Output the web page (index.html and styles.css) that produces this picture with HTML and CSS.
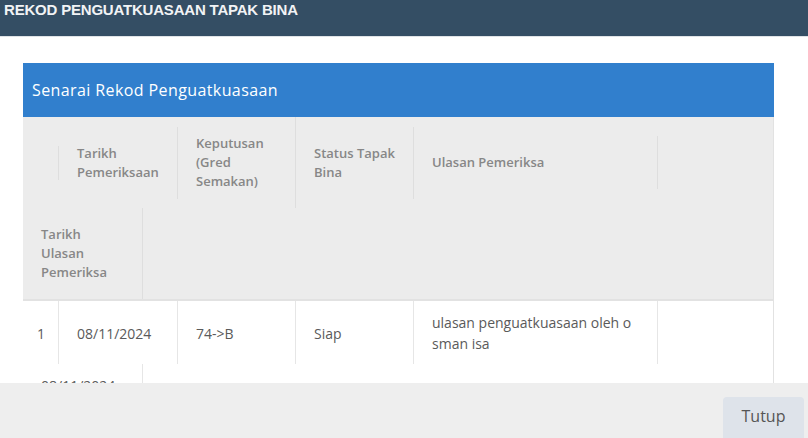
FILE: index.html
```html
<!DOCTYPE html>
<html lang="ms">
<head>
  <meta charset="UTF-8" />
  <meta name="viewport" content="width=device-width, initial-scale=1.0"/>
  <title>Rekod Penguatkuasaan Tapak Bina</title>
  <link rel="stylesheet" href="styles.css">
</head>
<body>

  <div class="modal">
    <div class="modal-header">
      <h4 class="modal-title">REKOD PENGUATKUASAAN TAPAK BINA</h4>
    </div>

    <div class="modal-body">
      <div class="panel">
        <div class="panel-heading">Senarai Rekod Penguatkuasaan</div>

        <div class="records">
          <div class="thead">
            <div class="th c-no"></div>
            <div class="th c-date">Tarikh Pemeriksaan</div>
            <div class="th c-grade">Keputusan (Gred Semakan)</div>
            <div class="th c-status">Status Tapak Bina</div>
            <div class="th c-note">Ulasan Pemeriksa</div>
            <div class="th c-review">Tarikh Ulasan Pemeriksa</div>
          </div>

          <div class="tr">
            <div class="td c-no">1</div>
            <div class="td c-date">08/11/2024</div>
            <div class="td c-grade">74-&gt;B</div>
            <div class="td c-status">Siap</div>
            <div class="td c-note">ulasan penguatkuasaan oleh osman isa</div>
            <div class="td c-review">08/11/2024</div>
          </div>
        </div>
      </div>
    </div>

    <div class="modal-footer">
      <button class="btn">Tutup</button>
    </div>
  </div>

</body>
</html>
```

FILE: styles.css
```css
* {
  margin: 0;
  padding: 0;
  box-sizing: border-box;
}
body {
  font-family: "Open Sans", "Liberation Sans", sans-serif;
  background: #fff;
  height: 100vh;
  overflow: hidden;
  color: #555;
}
.modal {
  display: flex;
  flex-direction: column;
  height: 100%;
}
.modal-header {
  flex: none;
  height: 37px;
  background: #344e64;
  border-bottom: 1px solid #dfe3e6;
  padding: 1px 4px 0;
}
.modal-title {
  font-family: "Liberation Sans", Arial, sans-serif;
  font-size: 15px;
  line-height: 17px;
  font-weight: bold;
  color: #f1f3f5;
  letter-spacing: -0.2px;
}
.modal-body {
  flex: 1;
  overflow: hidden;
  padding: 26px 34px 0 23px;
}
.panel-heading {
  height: 54px;
  background: #317fcd;
  color: #fff;
  font-size: 16px;
  letter-spacing: 0.4px;
  display: flex;
  align-items: center;
  padding-left: 9px;
}
.records {
  border-right: 1px solid #e2e2e2;
}
.thead,
.tr {
  display: flex;
  flex-wrap: wrap;
}
.thead {
  background: #ececec;
  align-items: center;
  border-bottom: 2px solid #e2e2e2;
}
.th,
.td {
  border-right: 1px solid #dedede;
}
.th {
  padding: 17px 18px;
  font-size: 13px;
  line-height: 19px;
  font-weight: 600;
  color: #878787;
  min-height: 34px;
}
.td {
  display: flex;
  align-items: center;
  padding: 11px 18px 10px;
  font-size: 14px;
  line-height: 21px;
  color: #5a5a5a;
  word-break: break-all;
  border-right-color: #e6e6e6;
}
.c-no { width: 36px; padding-left: 14px; padding-right: 0; }
.c-date { width: 119px; }
.c-grade { width: 118px; }
.c-status { width: 118px; }
.c-note { width: 244px; padding-right: 22px; }
.c-review { width: 120px; }
.modal-footer {
  flex: none;
  height: 55px;
  background: #eeeeee;
  display: flex;
  justify-content: flex-end;
  align-items: flex-start;
  padding: 14px 4px 0;
}
.btn {
  font-family: "Open Sans", sans-serif;
  font-size: 16px;
  color: #555;
  background: #dee3ea;
  border: none;
  border-radius: 4px;
  width: 81px;
  height: 44px;
  padding-bottom: 7px;
  cursor: pointer;
}
```
